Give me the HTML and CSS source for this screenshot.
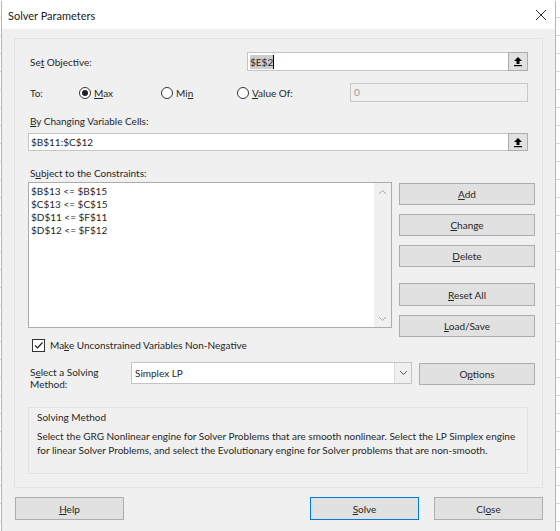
FILE: index.html
```html
<!DOCTYPE html>
<html>
<head>
    <title>Solver Parameters</title>
    <link rel="stylesheet" href="styles.css">
</head>
<body>
    <div class="dialog">
        <div class="titlebar">
            <span class="title">Solver Parameters</span>
            <svg class="close" width="12" height="12" viewBox="0 0 12 12">
                <path d="M1 1 L11 11 M11 1 L1 11" stroke="#333" stroke-width="1" fill="none"/>
            </svg>
        </div>

        <div class="panel">
            <!-- objective -->
            <div class="row row-objective">
                <label class="lbl lbl-objective">Se<u>t</u> Objective:</label>
                <div class="ref-field">
                    <div class="ref-text"><span class="sel">$E$2</span><span class="caret"></span></div>
                    <div class="ref-btn">
                        <svg width="10" height="11" viewBox="0 0 10 11">
                            <path d="M5 1 L9 5 L6.5 5 L6.5 8 L3.5 8 L3.5 5 L1 5 Z" fill="#000"/>
                            <rect x="1" y="9" width="8" height="1.2" fill="#000"/>
                        </svg>
                    </div>
                </div>
            </div>

            <div class="row row-to">
                <label class="lbl lbl-to">To:</label>
                <div class="radio-opt opt-max"><span class="radio checked"></span><span><u>M</u>ax</span></div>
                <div class="radio-opt opt-min"><span class="radio"></span><span>Mi<u>n</u></span></div>
                <div class="radio-opt opt-value"><span class="radio"></span><span><u>V</u>alue Of:</span></div>
                <div class="value-field">0</div>
            </div>

            <label class="lbl lbl-block lbl-changing"><u>B</u>y Changing Variable Cells:</label>
            <div class="ref-field ref-changing">
                <div class="ref-text">$B$11:$C$12</div>
                <div class="ref-btn">
                    <svg width="10" height="11" viewBox="0 0 10 11">
                        <path d="M5 1 L9 5 L6.5 5 L6.5 8 L3.5 8 L3.5 5 L1 5 Z" fill="#000"/>
                        <rect x="1" y="9" width="8" height="1.2" fill="#000"/>
                    </svg>
                </div>
            </div>

            <label class="lbl lbl-block lbl-subject">S<u>u</u>bject to the Constraints:</label>
            <div class="constraints">
                <div class="listbox">
                    <div class="list-items">
                        <div>$B$13 &lt;= $B$15</div>
                        <div>$C$13 &lt;= $C$15</div>
                        <div>$D$11 &lt;= $F$11</div>
                        <div>$D$12 &lt;= $F$12</div>
                    </div>
                    <div class="scrollbar">
                        <svg width="9" height="6" viewBox="0 0 9 6"><path d="M1 5 L4.5 1.5 L8 5" stroke="#a6a6a6" fill="none"/></svg>
                        <svg width="9" height="6" viewBox="0 0 9 6"><path d="M1 1 L4.5 4.5 L8 1" stroke="#a6a6a6" fill="none"/></svg>
                    </div>
                </div>
                <div class="side-buttons">
                    <button class="btn"><u>A</u>dd</button>
                    <button class="btn"><u>C</u>hange</button>
                    <button class="btn"><u>D</u>elete</button>
                    <button class="btn btn-reset"><u>R</u>eset All</button>
                    <button class="btn"><u>L</u>oad/Save</button>
                </div>
            </div>

            <div class="check-row">
                <span class="checkbox">
                    <svg width="11" height="11" viewBox="0 0 11 11"><path d="M2 5.5 L4.5 8 L9.5 2.5" stroke="#222" stroke-width="1.2" fill="none"/></svg>
                </span>
                <span>Ma<u>k</u>e Unconstrained Variables Non-Negative</span>
            </div>

            <div class="method-row">
                <label class="lbl lbl-method">S<u>e</u>lect a Solving<br>Method:</label>
                <div class="select">
                    <div class="select-text">Simplex LP</div>
                    <div class="select-btn">
                        <svg width="9" height="6" viewBox="0 0 9 6"><path d="M1 1 L4.5 4.5 L8 1" stroke="#555" fill="none"/></svg>
                    </div>
                </div>
                <button class="btn btn-options">O<u>p</u>tions</button>
            </div>

            <div class="method-group">
                <div class="group-title">Solving Method</div>
                <p class="group-text">Select the GRG Nonlinear engine for Solver Problems that are smooth nonlinear. Select the LP Simplex engine for linear Solver Problems, and select the Evolutionary engine for Solver problems that are non-smooth.</p>
            </div>
        </div>

        <div class="footer">
            <button class="btn btn-foot"><u>H</u>elp</button>
            <div class="spacer"></div>
            <button class="btn btn-foot btn-default"><u>S</u>olve</button>
            <button class="btn btn-foot">Cl<u>o</u>se</button>
        </div>
    </div>
</body>
</html>
```

FILE: styles.css
```css
* {
    box-sizing: border-box;
}
body {
    margin: 0;
    width: 560px;
    height: 531px;
    overflow: hidden;
    font-family: Lato, "Noto Sans", sans-serif;
    font-size: 10px;
    color: #262626;
    background: #fff repeating-linear-gradient(to bottom, #fff 0, #fff 17px, #d8d8d8 17px, #d8d8d8 18px);
}
.dialog {
    margin-left: 1px;
    margin-top: 1px;
    width: 555px;
    height: 530px;
    background: #f0f0f0;
    border-left: 1px solid #e6ad5c;
    border-right: 1px solid #e6ad5c;
}
.titlebar {
    height: 28px;
    background: #fff;
    display: flex;
    align-items: center;
    justify-content: space-between;
    padding: 0 8px 0 6px;
}
.title {
    font-size: 11px;
    color: #222;
}
.panel {
    margin: 9px 12px 0 12px;
    border: 1px solid #e2e2e2;
    padding: 13px 6px 13px 13px;
}
u {
    text-decoration-thickness: 1px;
    text-underline-offset: 1px;
}
.lbl {
    padding-left: 2px;
}
.row {
    display: flex;
    align-items: center;
    height: 19px;
}
.lbl-objective {
    width: 219px;
}
.ref-field {
    display: flex;
    width: 281px;
    height: 19px;
    background: #fff;
    border: 1px solid #c4c4c4;
}
.ref-text {
    flex: 1;
    padding-left: 2px;
    line-height: 17px;
    display: flex;
    align-items: center;
}
.sel {
    background: #cdcdcd;
    line-height: 14px;
}
.caret {
    width: 1px;
    height: 14px;
    background: #000;
}
.ref-btn {
    width: 20px;
    margin: -1px -1px -1px 0;
    background: #e1e1e1;
    border: 1px solid #adadad;
    display: flex;
    align-items: center;
    justify-content: center;
}
.row-to {
    margin-top: 12px;
}
.lbl-to {
    width: 51px;
}
.radio-opt {
    display: flex;
    align-items: center;
    gap: 3px;
}
.opt-max {
    width: 82px;
}
.opt-min {
    width: 76px;
}
.opt-value {
    width: 113px;
}
.radio {
    width: 12px;
    height: 12px;
    border: 1px solid #333;
    border-radius: 50%;
    background: #fff;
    display: flex;
    align-items: center;
    justify-content: center;
}
.radio.checked::after {
    content: "";
    width: 6px;
    height: 6px;
    border-radius: 50%;
    background: #222;
}
.value-field {
    width: 178px;
    height: 19px;
    border: 1px solid #c8c8c8;
    background: #f0f0f0;
    color: #9a9a9a;
    padding-left: 3px;
    line-height: 17px;
}
.lbl-block {
    display: block;
    line-height: 14px;
}
.lbl-changing {
    margin-top: 12px;
}
.ref-changing {
    margin-top: 5px;
    width: 500px;
    height: 18px;
}
.ref-changing .ref-text {
    line-height: 16px;
}
.lbl-subject {
    margin-top: 15px;
}
.constraints {
    display: flex;
    gap: 7px;
    margin-top: 2px;
}
.listbox {
    width: 364px;
    height: 146px;
    background: #fff;
    border: 1px solid #acacac;
    display: flex;
}
.list-items {
    flex: 1;
    padding: 2px 0 0 2px;
    line-height: 13px;
}
.scrollbar {
    width: 17px;
    background: #f0f0f0;
    display: flex;
    flex-direction: column;
    justify-content: space-between;
    align-items: center;
    padding: 6px 0 5px;
}
.side-buttons {
    display: flex;
    flex-direction: column;
    gap: 9px;
    padding-top: 1px;
}
.btn {
    font-family: inherit;
    font-size: 10px;
    color: #262626;
    background: #e1e1e1;
    border: 1px solid #adadad;
    padding: 0;
    height: 22px;
    width: 136px;
}
.btn-reset {
    margin-top: 7px;
    height: 23px;
}
.check-row {
    display: flex;
    align-items: center;
    gap: 5px;
    margin-top: 1px;
    margin-left: 4px;
    height: 14px;
}
.checkbox {
    width: 13px;
    height: 13px;
    border: 1px solid #333;
    background: #fff;
    display: flex;
    align-items: center;
    justify-content: center;
}
.method-row {
    display: flex;
    align-items: flex-start;
    margin-top: 10px;
}
.lbl-method {
    width: 103px;
    line-height: 12px;
    padding-top: 4px;
}
.select {
    width: 281px;
    height: 22px;
    border: 1px solid #c4c4c4;
    background: #fff;
    display: flex;
}
.select-text {
    flex: 1;
    padding-left: 3px;
    line-height: 20px;
}
.select-btn {
    width: 17px;
    background: #f0f0f0;
    border-left: 1px solid #d9d9d9;
    display: flex;
    align-items: center;
    justify-content: center;
}
.btn-options {
    margin-left: 7px;
    width: 116px;
    margin-top: 1px;
}
.method-group {
    margin-top: 17px;
    width: 500px;
    height: 67px;
    border: 1px solid #e2e2e2;
    padding: 3px 8px 0;
}
.group-title {
    line-height: 13px;
}
.group-text {
    margin: 5px 0 0;
    line-height: 14px;
}
.footer {
    display: flex;
    gap: 15px;
    padding: 0 12px 0 13px;
    margin-top: 9px;
}
.spacer {
    flex: 1;
}
.btn-foot {
    width: 109px;
    height: 23px;
}
.btn-default {
    border-color: #0078d7;
}
```
